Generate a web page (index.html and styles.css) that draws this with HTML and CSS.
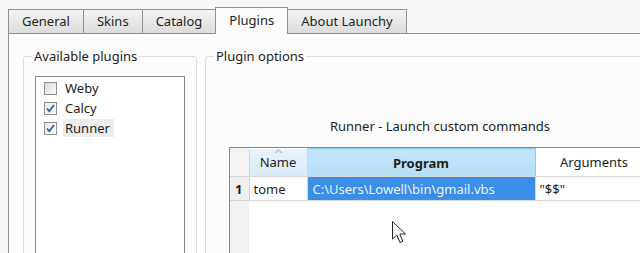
FILE: index.html
```html
<!DOCTYPE html>
<html lang="en">
<head>
  <meta charset="UTF-8" />
  <title>Launchy Options</title>
  <link rel="stylesheet" href="styles.css">
</head>
<body>
  <div class="window">
    <div class="tabs">
      <div class="tab">General</div>
      <div class="tab">Skins</div>
      <div class="tab">Catalog</div>
      <div class="tab active">Plugins</div>
      <div class="tab">About Launchy</div>
    </div>

    <div class="panel">
      <fieldset class="group plugin-list">
        <legend>Available plugins</legend>
        <ul class="listbox">
          <li><span class="check"></span><span class="label">Weby</span></li>
          <li>
            <span class="check on"><svg width="13" height="13" viewBox="0 0 13 13"><path d="M3 6.5 L5.3 9.3 L10 3" fill="none" stroke="#3b5aa0" stroke-width="1.8"/></svg></span>
            <span class="label">Calcy</span>
          </li>
          <li class="focus">
            <span class="check on"><svg width="13" height="13" viewBox="0 0 13 13"><path d="M3 6.5 L5.3 9.3 L10 3" fill="none" stroke="#3b5aa0" stroke-width="1.8"/></svg></span>
            <span class="label">Runner</span>
          </li>
        </ul>
      </fieldset>

      <fieldset class="group options">
        <legend>Plugin options</legend>
        <p class="caption">Runner - Launch custom commands</p>
        <div class="grid">
          <table>
            <colgroup>
              <col class="c-row"><col class="c-name"><col class="c-prog"><col class="c-args">
            </colgroup>
            <thead>
              <tr>
                <th class="corner"></th>
                <th class="name">
                  <svg class="sort" width="9" height="5" viewBox="0 0 9 5"><path d="M1 4 L4.5 1 L8 4" fill="none" stroke="#9aa4ae" stroke-width="1"/></svg>
                  Name
                </th>
                <th class="prog">Program</th>
                <th>Arguments</th>
              </tr>
            </thead>
            <tbody>
              <tr>
                <td class="rowhead">1</td>
                <td>tome</td>
                <td class="selected">C:\Users\Lowell\bin\gmail.vbs</td>
                <td>"$$"</td>
              </tr>
            </tbody>
          </table>
        </div>
      </fieldset>
    </div>

    <svg class="cursor" width="16" height="24" viewBox="0 0 16 24">
      <path d="M0.5 0.5 L0.5 18 L4.8 14 L8 21.5 L10.8 20.3 L7.8 13 L13.5 13 Z" fill="#fff" stroke="#222" stroke-width="1"/>
    </svg>
  </div>
</body>
</html>
```

FILE: styles.css
```css
* { box-sizing: border-box; }

body {
  margin: 0;
  height: 253px;
  overflow: hidden;
  background-color: #f8f8f8;
  color: #1e1e1e;
  font-family: "Noto Sans", "DejaVu Sans", sans-serif;
  font-size: 13px;
}

.window {
  position: relative;
  padding: 7px 0 0 8px;
}

/* tab strip */

.tabs {
  display: flex;
  align-items: flex-end;
  height: 26px;
  position: relative;
  z-index: 1;
}

.tab {
  height: 24px;
  line-height: 23px;
  padding: 0 13px;
  margin-left: -1px;
  border: 1px solid #8d9096;
  border-bottom: none;
  background: linear-gradient(#f4f4f4, #dcdcdc);
}

.tab:first-child { margin-left: 0; }

.tab.active {
  height: 27px;
  line-height: 24px;
  margin-bottom: -1px;
  background: #fcfcfc;
}

.panel {
  display: flex;
  gap: 8px;
  height: 240px;
  padding: 14px 0 0 14px;
  border-top: 1px solid #8d9096;
  border-left: 1px solid #8d9096;
  background-color: #fcfcfc;
}

/* group boxes */

.group {
  margin: 0;
  min-width: 0;
  padding: 0 10px;
  border: 1px solid #d5dfe5;
  border-radius: 3px;
}

.group legend {
  margin-left: -2px;
  padding: 0 2px;
  line-height: 16px;
}

.plugin-list {
  width: 174px;
  flex: none;
}

.listbox {
  list-style: none;
  width: 150px;
  height: 200px;
  margin: 12px 0 0 1px;
  padding: 1px 0 0 8px;
  border: 1px solid #828790;
  background-color: #fff;
}

.listbox li {
  display: flex;
  align-items: center;
  height: 20px;
}

.check {
  width: 13px;
  height: 13px;
  margin-right: 6px;
  border: 1px solid #8f8f8f;
  background: linear-gradient(135deg, #dcdcdc, #fbfbfb);
}

.check svg {
  display: block;
  margin: -1px 0 0 -1px;
}

.check.on {
  background: linear-gradient(135deg, #e3e8f0, #fdfdfd);
}

.label {
  padding: 0 2px;
  line-height: 18px;
}

.focus .label {
  padding-right: 4px;
  background-color: #ececec;
}

.options {
  width: 470px;
  flex: none;
  padding: 0 23px;
}

.options legend {
  margin-left: -15px;
}

.caption {
  margin: 54px 0 13px;
  line-height: 16px;
  text-align: center;
}

/* grid */

.grid {
  width: 440px;
  height: 120px;
  border: 1px solid #828790;
  background: linear-gradient(to right, #f2f2f2 19px, #fff 19px);
}

.grid table {
  table-layout: fixed;
  border-collapse: collapse;
  width: 423px;
}

.c-row { width: 19px; }
.c-name { width: 58px; }
.c-prog { width: 228px; }
.c-args { width: 118px; }

.grid th {
  position: relative;
  height: 28px;
  padding: 0;
  font-weight: normal;
  border-right: 1px solid #d5d5d5;
  border-bottom: 1px solid #d5d5d5;
  background: #fff;
}

.grid th.corner { background: #f4f4f4; }

.grid th.name {
  background: linear-gradient(#e8f3fc, #d9ebf8);
}

.grid th.prog {
  font-weight: bold;
  background: linear-gradient(#c4e6f9, #b6ddf3);
  border-top: 1px solid #8ec8ea;
  border-right-color: #93c9e8;
}

.sort {
  position: absolute;
  top: 0;
  left: 24px;
}

.grid td {
  height: 24px;
  padding: 0 4px;
  white-space: nowrap;
  overflow: hidden;
  border-right: 1px solid #d5d5d5;
  border-bottom: 1px solid #d5d5d5;
}

.grid td.rowhead {
  padding: 0 5px;
  font-weight: bold;
  background-color: #f0f0f0;
}

.grid td.selected {
  padding-left: 5px;
  color: #e6f2ff;
  background-color: #3a8ee8;
}

.cursor {
  position: absolute;
  left: 392px;
  top: 221px;
}
```
